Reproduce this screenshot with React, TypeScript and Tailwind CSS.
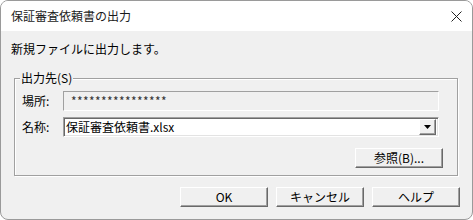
const font = { fontFamily: '"Noto Sans CJK JP", "Liberation Sans", sans-serif' };

function Btn({ label, className = '' }: { label: string; className?: string }) {
  return (
    <button
      className={`h-[20px] w-[88px] bg-[#f0f0f0] border border-t-white border-l-white border-b-[#696969] border-r-[#696969] shadow-[inset_-1px_-1px_#a0a0a0] text-[12px] leading-[12px] text-black flex items-center justify-center ${className}`}
    >
      {label}
    </button>
  );
}

export default function App() {
  return (
    <div
      style={font}
      className="w-[473px] h-[220px] bg-[#f0f0f0] border border-[#9a9a9a] rounded-[8px] overflow-hidden flex flex-col text-black"
    >
      {/* title bar */}
      <div className="h-[30px] bg-white flex items-center justify-between pl-[10px] pr-[10px] shrink-0">
        <span className="text-[12px] leading-[12px] text-[#1a1a1a]">保証審査依頼書の出力</span>
        <svg width="11" height="11" viewBox="0 0 11 11" className="mt-[1px]">
          <path d="M0.5 0.5 L10.5 10.5 M10.5 0.5 L0.5 10.5" stroke="#222" strokeWidth="1" />
        </svg>
      </div>

      <div className="mt-[12px] ml-[10px] text-[12px] leading-[12px]">新規ファイルに出力します。</div>

      {/* group box */}
      <div className="relative mt-[23px] ml-[13px] w-[444px] h-[98px] border border-[#a0a0a0] shadow-[inset_1px_1px_white,1px_1px_white]">
        <span className="absolute top-[-7px] left-[5px] px-[1px] bg-[#f0f0f0] text-[12px] leading-[12px]">
          出力先(S)
        </span>
        <div className="pt-[12px]">
          <div className="flex items-center h-[20px]">
            <span className="w-[48px] pl-[7px] text-[12px] leading-[12px]">場所:</span>
            <div className="w-[376px] h-[20px] border border-t-[#a0a0a0] border-l-[#a0a0a0] border-b-white border-r-white flex items-center pl-[7px] text-[12px] leading-[12px] tracking-[0.4px] text-[#333]">
              ****************
            </div>
          </div>
          <div className="flex items-center h-[20px] mt-[6px]">
            <span className="w-[48px] pl-[7px] text-[12px] leading-[12px]">名称:</span>
            <div className="w-[376px] h-[20px] bg-white border border-t-[#a0a0a0] border-l-[#a0a0a0] border-b-white border-r-white shadow-[inset_1px_1px_#696969,inset_-1px_-1px_#e3e3e3] flex items-center pl-[2px] pr-[2px]">
              <span className="flex-1 text-[12px] leading-[12px]">保証審査依頼書.xlsx</span>
              <div className="w-[17px] h-[16px] bg-[#f0f0f0] border border-t-white border-l-white border-b-[#696969] border-r-[#696969] shadow-[inset_-1px_-1px_#a0a0a0] flex items-center justify-center">
                <svg width="7" height="4" viewBox="0 0 7 4">
                  <path d="M0 0 H7 L3.5 4 Z" fill="#000" />
                </svg>
              </div>
            </div>
          </div>
          <div className="flex justify-end mt-[11px] pr-[14px]">
            <Btn label="参照(B)..." />
          </div>
        </div>
      </div>

      <div className="flex justify-end gap-[8px] mt-[11px] pr-[12px]">
        <Btn label="OK" />
        <Btn label="キャンセル" />
        <Btn label="ヘルプ" />
      </div>
    </div>
  );
}
